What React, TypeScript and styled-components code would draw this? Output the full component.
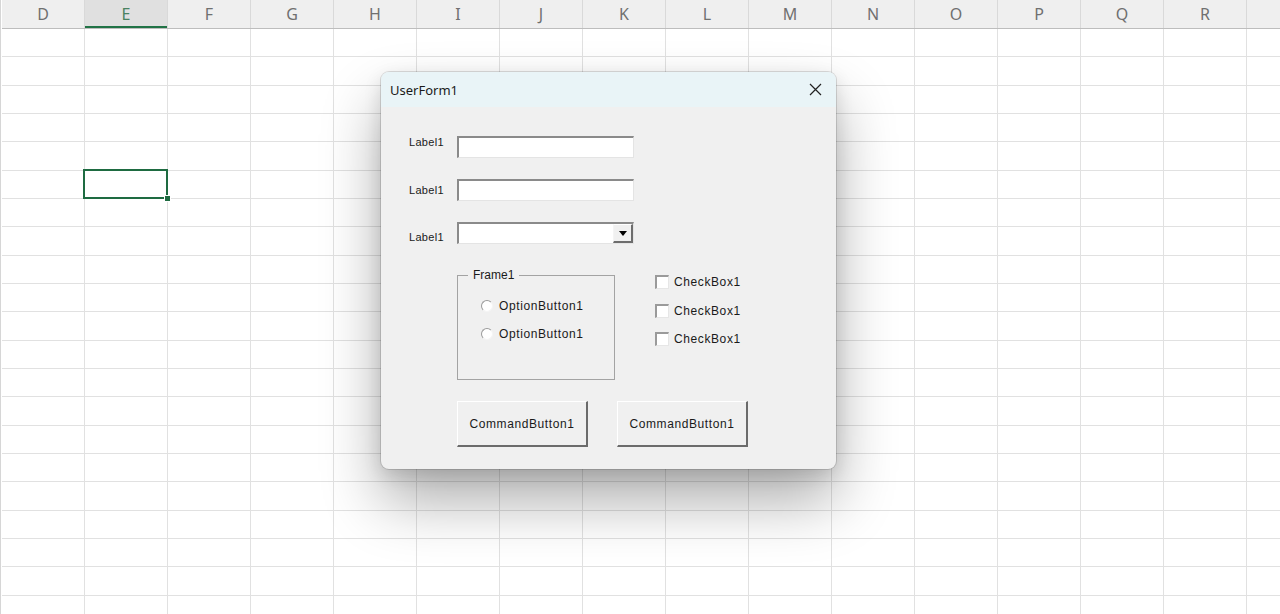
import styled, { createGlobalStyle } from "styled-components";

const GlobalStyle = createGlobalStyle`
  html, body {
    margin: 0;
    padding: 0;
    background: #ffffff;
    overflow: hidden;
  }
  body {
    width: 1280px;
    height: 614px;
    position: relative;
    font-family: "Liberation Sans", Arial, sans-serif;
  }
`;

const COLUMNS = ["D", "E", "F", "G", "H", "I", "J", "K", "L", "M", "N", "O", "P", "Q", "R", ""];
const ROW_COUNT = 21;
const SELECTED_COL = 1;
const SELECTED_ROW = 5;

const Sheet = styled.div`
  width: 1280px;
  height: 614px;
  overflow: hidden;
  border-left: 1px solid #d6d6d6;
  padding-left: 1px;
  box-sizing: border-box;
`;

const HeaderRow = styled.div`
  display: grid;
  grid-template-columns: repeat(16, 83px);
  height: 29px;
  box-sizing: border-box;
  background: #efefef;
  border-bottom: 1px solid #bdbdbd;
`;

const HeaderCell = styled.div<{ $active?: boolean }>`
  display: flex;
  align-items: center;
  justify-content: center;
  box-sizing: border-box;
  border-right: 1px solid #d9d9d9;
  font-family: "Noto Sans", "Open Sans", sans-serif;
  font-size: 16px;
  color: ${(p) => (p.$active ? "#4a8261" : "#707070")};
  background: ${(p) => (p.$active ? "#e0e0e0" : "transparent")};
  box-shadow: ${(p) => (p.$active ? "inset 0 -2px 0 #217346" : "none")};
`;

const Grid = styled.div`
  display: grid;
  grid-template-columns: repeat(16, 83px);
  grid-auto-rows: 28.33px;
`;

const Cell = styled.div<{ $selected?: boolean }>`
  position: relative;
  box-sizing: border-box;
  border-right: 1px solid #e1e1e1;
  border-bottom: 1px solid #e1e1e1;

  ${(p) =>
    p.$selected &&
    `
    &::after {
      content: "";
      position: absolute;
      top: -2px;
      left: -2px;
      right: -1px;
      bottom: -1px;
      border: 2px solid #1e6b41;
      z-index: 2;
    }
    &::before {
      content: "";
      position: absolute;
      right: -4px;
      bottom: -4px;
      width: 5px;
      height: 5px;
      background: #1e6b41;
      border: 1px solid #ffffff;
      z-index: 3;
    }
  `}
`;

const Dialog = styled.div`
  position: absolute;
  left: 381px;
  top: 72px;
  width: 455px;
  height: 397px;
  border-radius: 8px;
  overflow: hidden;
  background: #f0f0f0;
  display: flex;
  flex-direction: column;
  box-shadow: 0 0 0 1px rgba(0, 0, 0, 0.13), 0 32px 60px rgba(0, 0, 0, 0.32),
    0 6px 18px rgba(0, 0, 0, 0.12);
  z-index: 10;
`;

const TitleBar = styled.div`
  height: 35px;
  flex: none;
  display: flex;
  align-items: center;
  justify-content: space-between;
  padding: 0 14px 0 9px;
  background: #e9f4f7;
  font-family: "Noto Sans", "Open Sans", sans-serif;
  font-size: 13px;
  color: #1b1b1b;
`;

const CloseButton = styled.div`
  width: 14px;
  height: 14px;
  display: flex;
  align-items: center;
  justify-content: center;
`;

const Body = styled.div`
  flex: 1;
  display: flex;
  flex-direction: column;
  padding: 29px 0 0 28px;
  font-size: 12px;
  color: #1a1a1a;
`;

const Fields = styled.div`
  display: flex;
  flex-direction: column;
  gap: 21px;
`;

const FieldRow = styled.div`
  display: flex;
  height: 22px;
`;

const Label = styled.div<{ $align: string }>`
  width: 48px;
  display: flex;
  align-items: ${(p) => p.$align};
  font-size: 11px;
  letter-spacing: 0.3px;
  line-height: 13px;
`;

const TextBox = styled.div`
  width: 177px;
  height: 22px;
  box-sizing: border-box;
  background: #ffffff;
  border-style: solid;
  border-width: 2px 1px 1px 2px;
  border-color: #8a8a8a #e4e4e4 #e4e4e4 #8a8a8a;
  display: flex;
  justify-content: flex-end;
`;

const DropButton = styled.div`
  width: 20px;
  height: 19px;
  box-sizing: border-box;
  background: #f0f0f0;
  border-style: solid;
  border-width: 1px 2px 2px 1px;
  border-color: #ffffff #6d6d6d #6d6d6d #f4f4f4;
  display: flex;
  align-items: center;
  justify-content: center;
`;

const Arrow = styled.div`
  width: 0;
  height: 0;
  border-left: 4px solid transparent;
  border-right: 4px solid transparent;
  border-top: 5px solid #000;
  margin-top: 1px;
`;

const Lower = styled.div`
  display: flex;
  margin-top: 25px;
  padding-left: 48px;
`;

const Frame = styled.fieldset`
  width: 158px;
  height: 111px;
  box-sizing: border-box;
  margin: 0;
  padding: 0;
  border: 1px solid #a3a3a3;
  min-inline-size: 0;
`;

const Legend = styled.legend`
  margin-left: 10px;
  padding: 0 5px;
  font-size: 12px;
  line-height: 12px;
`;

const OptionList = styled.div`
  display: flex;
  flex-direction: column;
  gap: 12px;
  margin-top: 17px;
  padding-left: 23px;
`;

const ChoiceRow = styled.div<{ $gap: number }>`
  display: flex;
  align-items: center;
  height: 16px;
  gap: ${(p) => p.$gap}px;
  font-size: 12px;
  letter-spacing: 0.6px;
  white-space: nowrap;
`;

const Radio = styled.div`
  width: 12px;
  height: 12px;
  box-sizing: border-box;
  border-radius: 50%;
  background: #ffffff;
  border: 1px solid;
  border-color: #9a9a9a #f4f4f4 #f4f4f4 #9a9a9a;
`;

const CheckList = styled.div`
  display: flex;
  flex-direction: column;
  gap: 12.5px;
  margin-left: 40px;
  padding-top: 5px;
`;

const CheckBox = styled.div`
  width: 14px;
  height: 14px;
  box-sizing: border-box;
  background: #ffffff;
  border-style: solid;
  border-width: 2px 1px 1px 2px;
  border-color: #9a9a9a #e6e6e6 #e6e6e6 #9a9a9a;
`;

const ButtonRow = styled.div`
  display: flex;
  gap: 29px;
  margin-top: 21px;
  padding-left: 48px;
`;

const CommandButton = styled.div`
  width: 131px;
  height: 46px;
  box-sizing: border-box;
  background: #f0f0f0;
  border-style: solid;
  border-width: 1px 2px 2px 1px;
  border-color: #ffffff #6b6b6b #6b6b6b #ffffff;
  display: flex;
  align-items: center;
  justify-content: center;
  font-size: 12px;
  letter-spacing: 0.6px;
`;

function App() {
  return (
    <>
      <GlobalStyle />
      <Sheet>
        <HeaderRow>
          {COLUMNS.map((c, i) => (
            <HeaderCell key={i} $active={i === SELECTED_COL}>
              {c}
            </HeaderCell>
          ))}
        </HeaderRow>
        <Grid>
          {Array.from({ length: ROW_COUNT * COLUMNS.length }).map((_, i) => (
            <Cell
              key={i}
              $selected={
                Math.floor(i / COLUMNS.length) === SELECTED_ROW &&
                i % COLUMNS.length === SELECTED_COL
              }
            />
          ))}
        </Grid>
      </Sheet>

      <Dialog>
        <TitleBar>
          <span>UserForm1</span>
          <CloseButton>
            <svg width="13" height="13" viewBox="0 0 13 13">
              <path d="M1 1 L12 12 M12 1 L1 12" stroke="#222" strokeWidth="1.2" fill="none" />
            </svg>
          </CloseButton>
        </TitleBar>
        <Body>
          <Fields>
            <FieldRow>
              <Label $align="flex-start">Label1</Label>
              <TextBox />
            </FieldRow>
            <FieldRow>
              <Label $align="center">Label1</Label>
              <TextBox />
            </FieldRow>
            <FieldRow>
              <Label $align="flex-end">Label1</Label>
              <TextBox>
                <DropButton>
                  <Arrow />
                </DropButton>
              </TextBox>
            </FieldRow>
          </Fields>

          <Lower>
            <Frame>
              <Legend>Frame1</Legend>
              <OptionList>
                <ChoiceRow $gap={6}>
                  <Radio />
                  OptionButton1
                </ChoiceRow>
                <ChoiceRow $gap={6}>
                  <Radio />
                  OptionButton1
                </ChoiceRow>
              </OptionList>
            </Frame>
            <CheckList>
              {[0, 1, 2].map((i) => (
                <ChoiceRow key={i} $gap={5}>
                  <CheckBox />
                  CheckBox1
                </ChoiceRow>
              ))}
            </CheckList>
          </Lower>

          <ButtonRow>
            <CommandButton>CommandButton1</CommandButton>
            <CommandButton>CommandButton1</CommandButton>
          </ButtonRow>
        </Body>
      </Dialog>
    </>
  );
}

export default App;
